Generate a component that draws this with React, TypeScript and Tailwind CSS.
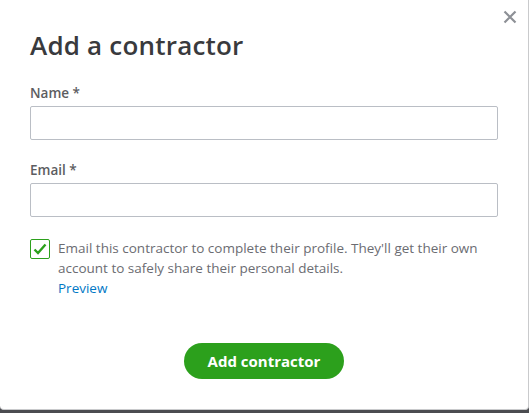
import React from 'react';

function CloseIcon() {
    return (
        <svg width="14" height="14" viewBox="0 0 14 14" fill="none">
            <path d="M1.5 1.5 L12.5 12.5 M12.5 1.5 L1.5 12.5" stroke="#8d9096" strokeWidth="2.2" />
        </svg>
    );
}

function Field({ label }: { label: string }) {
    return (
        <div className="flex flex-col">
            <label className="text-[13.5px] font-semibold text-[#5c5d61] leading-5 mb-[3px]">{label}</label>
            <input type="text" className="w-[468px] h-[34px] border border-[#babec5] rounded-[2px] px-2 text-sm focus:outline-none" />
        </div>
    );
}

export default function App() {
    return (
        <div className="w-[529px] h-[413px] bg-[#4b4c50]" style={{ fontFamily: '"Open Sans", "Noto Sans", sans-serif' }}>
            <div className="relative w-full h-[410px] bg-white border-r border-b border-[#c9cacc] rounded-b-[4px]">
                <button className="absolute top-[10px] right-[11px] p-0">
                    <CloseIcon />
                </button>
                <div className="pl-[30px] pt-[27px]">
                    <h1 className="text-[26px] font-semibold text-[#393a3d] leading-9 tracking-[0.2px]">Add a contractor</h1>
                    <div className="mt-[20px] flex flex-col gap-[20px]">
                        <Field label="Name *" />
                        <Field label="Email *" />
                    </div>
                    <div className="mt-[21px] flex items-start gap-[8px]">
                        <div className="w-[20px] h-[20px] mt-[1px] border border-[#2ca01c] rounded-[2px] flex items-center justify-center shrink-0">
                            <svg width="14" height="12" viewBox="0 0 14 12" fill="none">
                                <path d="M1.5 6.5 L5 10 L12.5 1.5" stroke="#2ca01c" strokeWidth="2.4" />
                            </svg>
                        </div>
                        <div className="text-[13.5px] leading-5 text-[#6b6c72] w-[440px]">
                            <p>Email this contractor to complete their profile. They'll get their own account to safely share their personal details.</p>
                            <a href="#" className="text-[#0077c5]">Preview</a>
                        </div>
                    </div>
                    <div className="mt-[45px] flex justify-center pr-[30px]">
                        <button className="w-[160px] h-[36px] rounded-full bg-[#2ca01c] text-white text-[15px] font-bold">Add contractor</button>
                    </div>
                </div>
            </div>
        </div>
    );
}
